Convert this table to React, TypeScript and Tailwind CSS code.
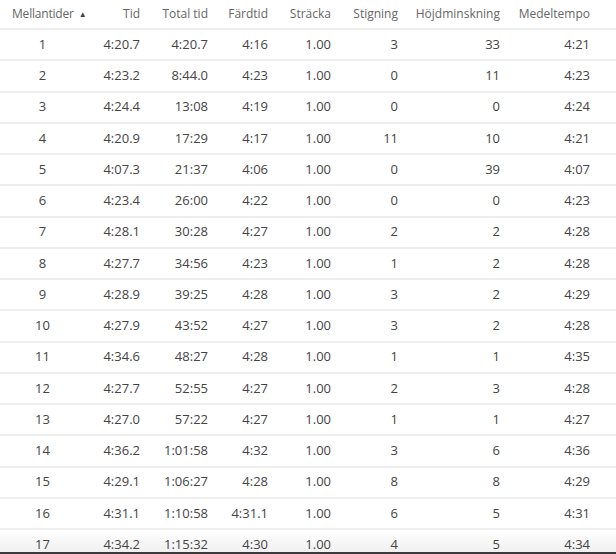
const columns = ["Tid", "Total tid", "Färdtid", "Sträcka", "Stigning", "Höjdminskning", "Medeltempo"]

const laps: string[][] = [
  ["1", "4:20.7", "4:20.7", "4:16", "1.00", "3", "33", "4:21"],
  ["2", "4:23.2", "8:44.0", "4:23", "1.00", "0", "11", "4:23"],
  ["3", "4:24.4", "13:08", "4:19", "1.00", "0", "0", "4:24"],
  ["4", "4:20.9", "17:29", "4:17", "1.00", "11", "10", "4:21"],
  ["5", "4:07.3", "21:37", "4:06", "1.00", "0", "39", "4:07"],
  ["6", "4:23.4", "26:00", "4:22", "1.00", "0", "0", "4:23"],
  ["7", "4:28.1", "30:28", "4:27", "1.00", "2", "2", "4:28"],
  ["8", "4:27.7", "34:56", "4:23", "1.00", "1", "2", "4:28"],
  ["9", "4:28.9", "39:25", "4:28", "1.00", "3", "2", "4:29"],
  ["10", "4:27.9", "43:52", "4:27", "1.00", "3", "2", "4:28"],
  ["11", "4:34.6", "48:27", "4:28", "1.00", "1", "1", "4:35"],
  ["12", "4:27.7", "52:55", "4:27", "1.00", "2", "3", "4:28"],
  ["13", "4:27.0", "57:22", "4:27", "1.00", "1", "1", "4:27"],
  ["14", "4:36.2", "1:01:58", "4:32", "1.00", "3", "6", "4:36"],
  ["15", "4:29.1", "1:06:27", "4:28", "1.00", "8", "8", "4:29"],
  ["16", "4:31.1", "1:10:58", "4:31.1", "1.00", "6", "5", "4:31"],
  ["17", "4:34.2", "1:15:32", "4:30", "1.00", "4", "5", "4:34"],
]

const grid = "grid grid-cols-[85px_65px_68px_60px_63px_67px_102px_1fr]"

export default function App() {
  return (
    <div className="w-[616px] h-[554px] flex flex-col bg-white font-['Open_Sans',sans-serif]">
      <div className="h-[552px] overflow-hidden">
        {/* Header */}
        <div className={`${grid} h-[30px] items-center border-b-2 border-[#eeeeee] text-[12px] text-[#666]`}>
          <div className="pl-3 flex items-center gap-[5px] tracking-[-0.2px]">
            Mellantider
            <span className="text-[8px] leading-none text-[#444]">▲</span>
          </div>
          {columns.map((c, i) => (
            <div key={c} className={`text-right ${i === columns.length - 1 ? "pr-[26px]" : "pr-[10px]"}`}>
              {c}
            </div>
          ))}
        </div>

        {/* Rows */}
        {laps.map((row, idx) => (
          <div
            key={row[0]}
            className={`${grid} h-[31.25px] items-center border-b-2 border-[#eeeeee] text-[13px] text-[#444] ${
              idx === laps.length - 1 ? "bg-gradient-to-b from-white to-[#ebebeb]" : ""
            }`}
          >
            <div className="text-center">{row[0]}</div>
            {row.slice(1).map((v, i) => (
              <div key={i} className={`text-right ${i === row.length - 2 ? "pr-[26px]" : "pr-[10px]"}`}>
                {v}
              </div>
            ))}
          </div>
        ))}
      </div>
      <div className="h-[2px] bg-[#3a3a3a]" />
    </div>
  )
}
